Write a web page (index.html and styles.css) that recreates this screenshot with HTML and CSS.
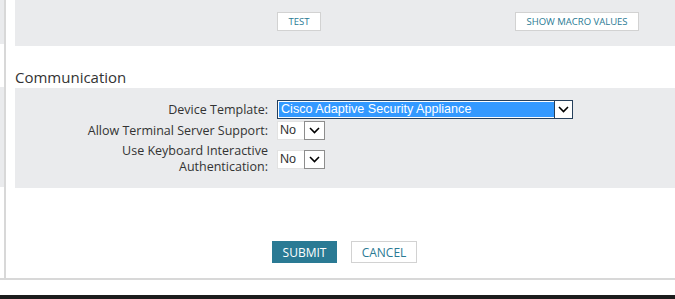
FILE: index.html
```html
<!DOCTYPE html>
<html lang="en">
<head>
    <meta charset="UTF-8">
    <title>Communication</title>
    <link rel="stylesheet" href="styles.css">
</head>
<body>
    <div class="shell">
        <!-- edge of the previous column -->
        <div class="side">
            <div class="side-gray top"></div>
            <div class="side-white gap"></div>
            <div class="side-gray mid"></div>
        </div>

        <div class="frame">
            <div class="panel actions">
                <button class="btn btn-light test-btn">TEST</button>
                <button class="btn btn-light macro-btn">SHOW MACRO VALUES</button>
            </div>

            <h2 class="section-title">Communication</h2>

            <div class="panel form">
                <div class="row">
                    <label class="label">Device Template:</label>
                    <div class="select wide focused">
                        <span class="value">Cisco Adaptive Security Appliance</span>
                        <span class="arrow">
                            <svg width="11" height="7" viewBox="0 0 11 7"><path d="M1 1 L5.5 5.5 L10 1" fill="none" stroke="#000" stroke-width="1.6"/></svg>
                        </span>
                    </div>
                </div>
                <div class="row">
                    <label class="label">Allow Terminal Server Support:</label>
                    <div class="select small">
                        <span class="value">No</span>
                        <span class="arrow">
                            <svg width="11" height="7" viewBox="0 0 11 7"><path d="M1 1 L5.5 5.5 L10 1" fill="none" stroke="#000" stroke-width="1.6"/></svg>
                        </span>
                    </div>
                </div>
                <div class="row">
                    <label class="label">Use Keyboard Interactive<br>Authentication:</label>
                    <div class="select small">
                        <span class="value">No</span>
                        <span class="arrow">
                            <svg width="11" height="7" viewBox="0 0 11 7"><path d="M1 1 L5.5 5.5 L10 1" fill="none" stroke="#000" stroke-width="1.6"/></svg>
                        </span>
                    </div>
                </div>
            </div>

            <div class="footer">
                <button class="btn btn-primary">SUBMIT</button>
                <button class="btn btn-light cancel-btn">CANCEL</button>
            </div>
        </div>
    </div>
    <div class="taskbar"></div>
</body>
</html>
```

FILE: styles.css
```css
:root {
    --panel-bg: #eaebed;
    --line: #d8d8d8;
    --teal: #2a7a94;
    --text: #333;
}

body {
    margin: 0;
    width: 675px;
    height: 299px;
    overflow: hidden;
    background: #fff;
    font-family: 'Open Sans', sans-serif;
    color: var(--text);
}

.shell {
    display: flex;
    height: 278px;
    border-bottom: 2px solid var(--line);
}

.side {
    width: 4px;
    flex-shrink: 0;
}

.side-gray {
    background: var(--panel-bg);
}

.side-gray.top {
    height: 44px;
}

.side-white.gap {
    height: 43px;
}

.side-gray.mid {
    height: 100px;
}

.frame {
    flex: 1;
    border-left: 2px solid var(--line);
    padding-left: 9px;
    min-width: 0;
}

.panel {
    background: var(--panel-bg);
}

.actions {
    height: 46px;
    display: flex;
    align-items: flex-start;
    padding-top: 12px;
    padding-left: 262px;
    box-sizing: border-box;
}

.btn {
    font-family: 'Open Sans', sans-serif;
    cursor: pointer;
    padding: 0;
    box-sizing: border-box;
}

.btn-light {
    background: #fff;
    border: 1px solid #d2d2d2;
    color: var(--teal);
}

.test-btn,
.macro-btn {
    height: 19px;
    font-size: 9.5px;
    line-height: 17px;
}

.test-btn {
    width: 44px;
}

.macro-btn {
    width: 124px;
    margin-left: 194px;
}

.section-title {
    margin: 0;
    padding-top: 21px;
    height: 42px;
    box-sizing: border-box;
    font-weight: normal;
    font-size: 15px;
    line-height: 20px;
}

.form {
    height: 100px;
    box-sizing: border-box;
    padding-top: 12px;
    display: flex;
    flex-direction: column;
    gap: 2px;
}

.row {
    display: grid;
    grid-template-columns: 253px auto;
    column-gap: 9px;
    align-items: center;
}

.row:last-child {
    margin-top: 1px;
}

.label {
    text-align: right;
    font-size: 12.5px;
    line-height: 16px;
}

.select {
    display: flex;
    height: 19px;
    box-sizing: border-box;
    font-family: 'Liberation Sans', Arial, sans-serif;
    font-size: 12.6px;
    background: #fff;
}

.select .value {
    flex: 1;
    padding-left: 3px;
    line-height: 17px;
}

.select .arrow {
    display: flex;
    align-items: center;
    justify-content: center;
    width: 19px;
    box-sizing: border-box;
    background: #fff;
}

.select.wide {
    width: 296px;
    border: 1px solid #26405c;
}

.select.wide.focused .value {
    background: #3399ff;
    color: #fff;
    margin: 1px 0 1px 1px;
    line-height: 15px;
    padding-left: 2px;
}

.select.wide .arrow {
    border-left: 1px solid #26405c;
    width: 18px;
}

.select.small {
    width: 48px;
    border: 1px solid #e2e2e2;
}

.select.small .value {
    padding-left: 2px;
}

.select.small .arrow {
    width: 21px;
    border: 1px solid #8d8d8d;
    margin: -1px -1px -1px 0;
    height: 19px;
}

.footer {
    display: flex;
    gap: 14px;
    padding-top: 53px;
    padding-left: 257px;
}

.btn-primary {
    background: var(--teal);
    border: none;
    color: #fff;
    width: 65px;
    height: 22px;
    font-size: 12px;
}

.cancel-btn {
    width: 66px;
    height: 22px;
    font-size: 12px;
}

.taskbar {
    margin-top: 15px;
    height: 4px;
    background: #1c1c1c;
}
```
